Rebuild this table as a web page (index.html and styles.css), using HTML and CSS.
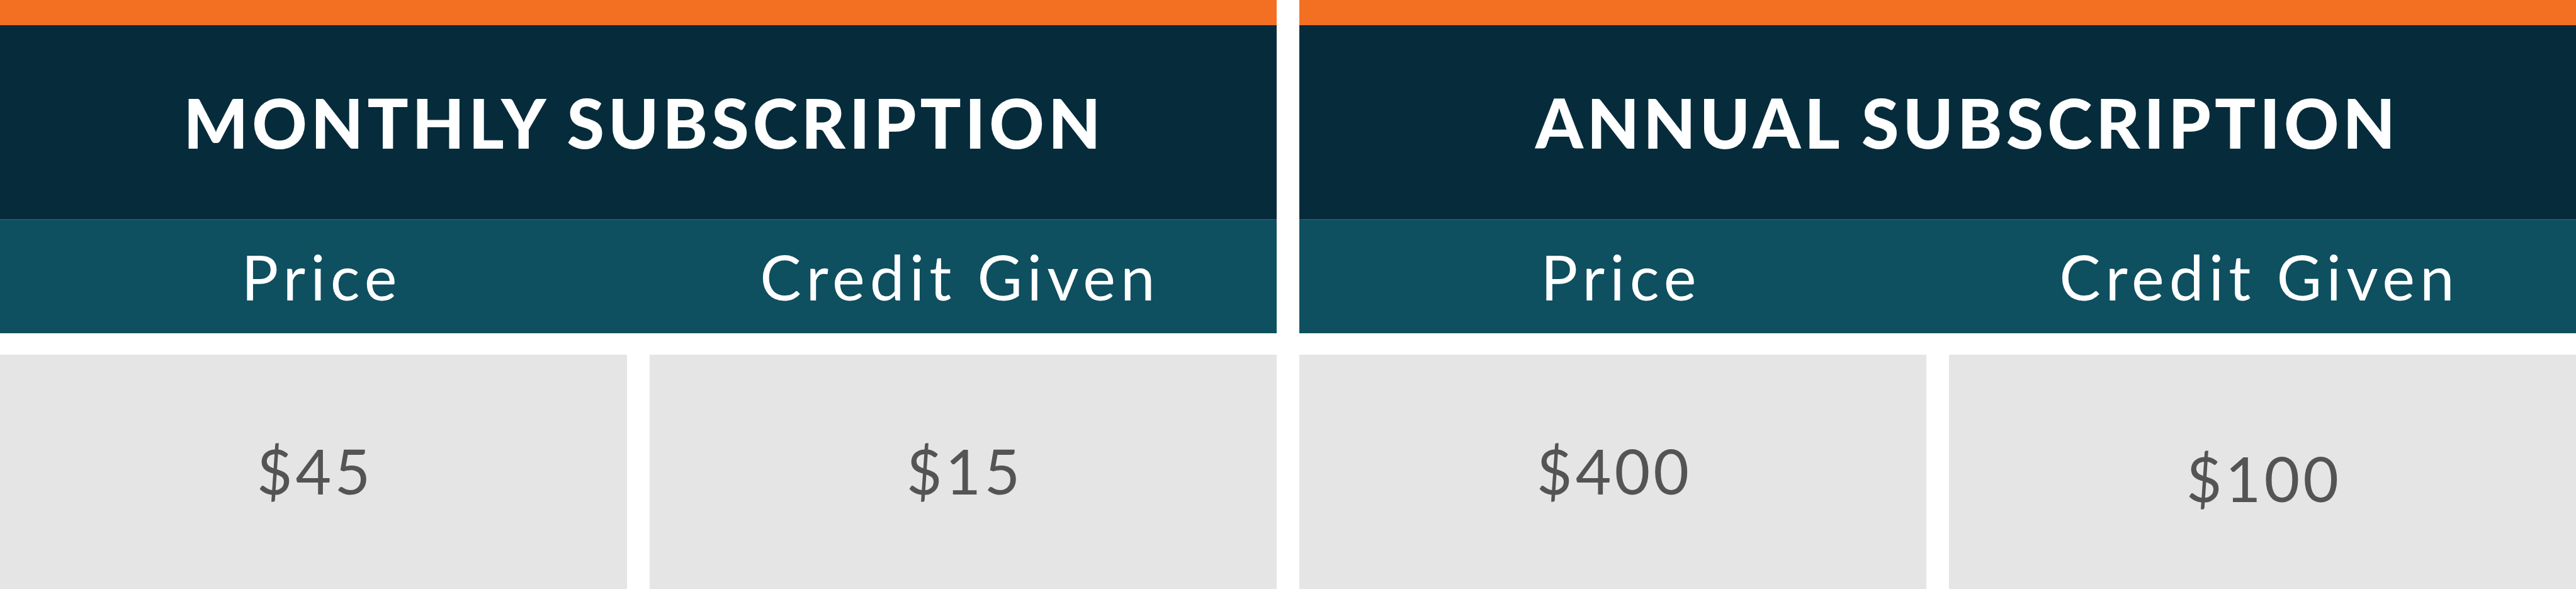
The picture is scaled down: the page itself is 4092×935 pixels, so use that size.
FILE: index.html
```html
<!DOCTYPE html>
<html lang="en">
<head>
<meta charset="utf-8">
<title>Subscriptions</title>
<link rel="stylesheet" href="styles.css">
</head>
<body>
<main class="pricing">
  <section class="plan">
    <div class="plan-bar"></div>
    <h2 class="plan-title plan-title--monthly">MONTHLY SUBSCRIPTION</h2>
    <div class="plan-cols">
      <div class="plan-col">Price</div>
      <div class="plan-col">Credit Given</div>
    </div>
    <div class="plan-values">
      <div class="value">$45</div>
      <div class="value">$15</div>
    </div>
  </section>
  <section class="plan">
    <div class="plan-bar"></div>
    <h2 class="plan-title plan-title--annual">ANNUAL SUBSCRIPTION</h2>
    <div class="plan-cols">
      <div class="plan-col">Price</div>
      <div class="plan-col">Credit Given</div>
    </div>
    <div class="plan-values">
      <div class="value">$400</div>
      <div class="value value--low">$100</div>
    </div>
  </section>
</main>
</body>
</html>
```
FILE: styles.css
```css
html, body {
  margin: 0;
  padding: 0;
  background: #ffffff;
}

body {
  font-family: Lato, "Open Sans", "Liberation Sans", sans-serif;
  width: 4092px;
  height: 935px;
  overflow: hidden;
}

.pricing {
  display: grid;
  grid-template-columns: 1fr 1fr;
  column-gap: 36px;
}

.plan {
  display: flex;
  flex-direction: column;
}

.plan-bar {
  height: 40px;
  background: #f37022;
}

.plan-title {
  margin: 0;
  height: 308px;
  display: flex;
  align-items: center;
  justify-content: center;
  background: #062c3c;
  color: #ffffff;
  font-weight: 900;
  font-size: 108px;
  letter-spacing: 6px;
  border-bottom: 1px solid #3c6472;
  box-sizing: content-box;
}

.plan-title--monthly {
  padding-left: 18px;
}

.plan-title--annual {
  padding-left: 94px;
}

.plan-cols {
  display: grid;
  grid-template-columns: 1fr 1fr;
  height: 180px;
  background: #0e4f60;
  color: #ffffff;
  font-size: 98px;
  font-weight: 400;
  letter-spacing: 8px;
}

.plan-col {
  display: flex;
  align-items: center;
  justify-content: center;
  padding-left: 8px;
}

.plan-values {
  display: grid;
  grid-template-columns: 1fr 1fr;
  column-gap: 36px;
  margin-top: 34px;
  height: 372px;
}

.value {
  display: flex;
  align-items: center;
  justify-content: center;
  padding-bottom: 4px;
  padding-left: 5px;
  background: #e5e5e5;
  color: #545454;
  font-size: 98px;
  letter-spacing: 5px;
}

.value--low {
  padding-top: 20px;
  padding-bottom: 0;
}
```
